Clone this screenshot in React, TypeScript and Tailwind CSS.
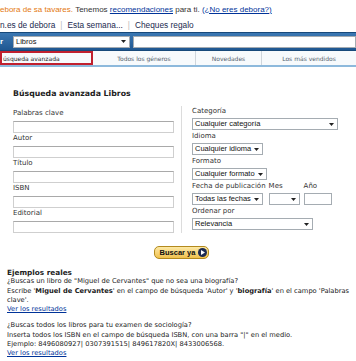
import React from "react";

const vd = "font-['DejaVu_Sans',Verdana,sans-serif]";
const ar = "font-['Liberation_Sans',Arial,sans-serif]";

function Arrow() {
  return (
    <svg width="5" height="3" viewBox="0 0 5 3" className="shrink-0">
      <path d="M0 0h5L2.5 3z" fill="#222" />
    </svg>
  );
}

function Select({ text, className }: { text: string; className: string }) {
  return (
    <div
      className={`flex h-[12px] items-center justify-between border border-[#a5acb2] bg-white pl-[2px] pr-[3px] ${ar} text-[7.5px] leading-none text-[#111] ${className}`}
    >
      <span className="whitespace-nowrap">{text}</span>
      <Arrow />
    </div>
  );
}

function Field({ label }: { label: string }) {
  return (
    <div className="flex flex-col">
      <span className={`${vd} text-[7px] leading-[9px] text-[#333]`}>{label}</span>
      <div className="mt-[3px] h-[12px] border border-[#cfcfcf] border-t-[#a9a9a9] bg-white" />
    </div>
  );
}

function Label({ children }: { children: React.ReactNode }) {
  return <span className={`${vd} block whitespace-nowrap text-[7px] leading-[9px] text-[#333]`}>{children}</span>;
}

export default function App() {
  return (
    <div className="relative h-[361px] w-[356px] overflow-hidden bg-white">
      {/* greeting */}
      <div className={`${ar} flex h-[19px] items-center whitespace-nowrap text-[8px] text-[#333]`}>
        <span className="text-[#e47911]">ebora de sa tavares.</span>
        <span>&nbsp;Tenemos&nbsp;</span>
        <span className="text-[#003399] underline">recomendaciones</span>
        <span>&nbsp;para ti.&nbsp;</span>
        <span className="text-[#003399] underline">(¿No eres debora?)</span>
      </div>

      {/* nav links */}
      <div className={`${ar} flex h-[13px] items-center whitespace-nowrap text-[8.3px] text-[#1b2a4f]`}>
        <span>n.es de debora</span>
        <span className="px-[5px] text-[#bbb]">|</span>
        <span>Esta semana...</span>
        <span className="px-[5px] text-[#bbb]">|</span>
        <span>Cheques regalo</span>
      </div>

      {/* search bar */}
      <div className="flex h-[19px] items-center gap-[3px] border-y border-[#17497a] bg-gradient-to-b from-[#3b78b3] to-[#1f5791]">
        <span className={`${ar} w-[10px] text-[8px] font-bold leading-none text-white`}>r</span>
        <Select text="Libros" className="w-[117px]" />
        <div className="h-[12px] flex-1 border border-[#a5acb2] bg-white" />
      </div>

      {/* tabs */}
      <div className={`${vd} flex h-[16px] items-stretch border-b-2 border-[#8db9dc] bg-[#f7fafc] text-[6px] text-[#55626e]`}>
        <div className="flex w-[93px] items-center border-2 border-[#c0202e] pl-[1px] text-[#222]">
          <span className="whitespace-nowrap">úsqueda avanzada</span>
        </div>
        <div className="flex w-[103px] items-center justify-center border-r border-[#cfd6dc]">Todos los géneros</div>
        <div className="flex w-[66px] items-center justify-center border-r border-[#cfd6dc]">Novedades</div>
        <div className="flex flex-1 items-center justify-center">Los más vendidos</div>
      </div>

      {/* form */}
      <div className="pl-[13px] pt-[22px]">
        <div className={`${vd} text-[7.8px] font-bold leading-[10px] text-[#222]`}>Búsqueda avanzada Libros</div>
        <div className="flex pt-[7px]">
          <div className="flex w-[161px] flex-col gap-[1px] pt-[3px]">
            <Field label="Palabras clave" />
            <Field label="Autor" />
            <Field label="Título" />
            <Field label="ISBN" />
            <Field label="Editorial" />
          </div>
          <div className="ml-[7px] w-px bg-[#dcdcdc]" />
          <div className="ml-[10px] flex flex-col gap-[2px] pt-[1px]">
            <div>
              <Label>Categoría</Label>
              <Select text="Cualquier categoría" className="mt-[2px] w-[146px]" />
            </div>
            <div>
              <Label>Idioma</Label>
              <Select text="Cualquier idioma" className="mt-[2px] w-[71px]" />
            </div>
            <div>
              <Label>Formato</Label>
              <Select text="Cualquier formato" className="mt-[2px] w-[75px]" />
            </div>
            <div className="flex gap-[3px]">
              <div>
                <Label>Fecha de publicación</Label>
                <Select text="Todas las fechas" className="mt-[2px] w-[71px]" />
              </div>
              <div>
                <Label>Mes</Label>
                <Select text="" className="mt-[2px] w-[31px]" />
              </div>
              <div className="pl-[1px]">
                <Label>Año</Label>
                <div className="mt-[2px] h-[12px] w-[28px] border border-[#a5acb2] bg-white" />
              </div>
            </div>
            <div>
              <Label>Ordenar por</Label>
              <Select text="Relevancia" className="mt-[2px] w-[121px]" />
            </div>
          </div>
        </div>

        {/* button */}
        <div className="flex justify-center pr-[6px] pt-[13px]">
          <div className="flex h-[13px] items-center gap-[3px] rounded-[5px] border border-[#b38a1e] bg-gradient-to-b from-[#fde9a4] to-[#f0c14b] pl-[5px] pr-[1px]">
            <span className={`${ar} text-[7.5px] font-bold leading-none text-[#111]`}>Buscar ya</span>
            <span className="flex h-[9px] w-[9px] items-center justify-center rounded-full bg-[#1b2a52]">
              <svg width="4" height="5" viewBox="0 0 4 5">
                <path d="M0 0l4 2.5L0 5z" fill="#fff" />
              </svg>
            </span>
          </div>
        </div>
      </div>

      {/* examples */}
      <div className={`${vd} whitespace-nowrap pl-[7px] pt-[9px] text-[6.7px] leading-[9.3px] text-[#222]`}>
        <div className="text-[7.3px] font-bold">Ejemplos reales</div>
        <div>¿Buscas un libro de "Miguel de Cervantes" que no sea una biografía?</div>
        <div>
          Escribe '<b>Miguel de Cervantes</b>' en el campo de búsqueda 'Autor' y '<b>biografía</b>' en el campo 'Palabras
        </div>
        <div>clave'.</div>
        <div className="text-[#003399] underline">Ver los resultados</div>
        <div className="mt-[7px]">¿Buscas todos los libros para tu examen de sociología?</div>
        <div>Inserta todos los ISBN en el campo de búsqueda ISBN, con una barra "|" en el medio.</div>
        <div>Ejemplo: 8496080927| 0307391515| 849617820X| 8433006568.</div>
        <div className="text-[#003399] underline">Ver los resultados</div>
      </div>
    </div>
  );
}
